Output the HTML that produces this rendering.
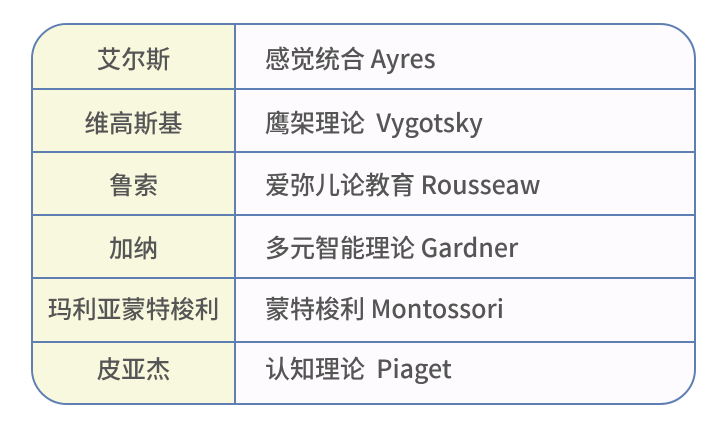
<!DOCTYPE html>
<html><head><meta charset="utf-8"><style>
body{margin:0;width:726px;height:434px;background:#fff;font-family:"Noto Sans CJK SC",sans-serif;}
.box{position:absolute;left:31px;top:23px;width:661px;height:378px;border:2px solid #5f7fb2;border-radius:36px;overflow:hidden;background:#fdfbfd;}
.l{position:absolute;left:0;top:0;width:201px;height:100%;background:#f8f8de;border-right:2px solid #5f7fb2;}
.row{position:absolute;left:0;width:661px;height:63px;}
.row .a{position:absolute;left:0;top:1px;width:201px;text-align:center;line-height:63px;font-size:24.5px;color:#555;font-weight:500;}
.row .b{position:absolute;left:232px;top:1px;line-height:63px;font-size:25px;color:#555;font-weight:500;}
.ln{position:absolute;left:0;width:661px;height:2px;background:#5f7fb2;}
</style></head><body>
<div class="box">
<div class="l"></div>
<div class="row" style="top:1px"><div class="a">艾尔斯</div><div class="b">感觉统合 Ayres</div></div>
<div class="ln" style="top:63px"></div>
<div class="row" style="top:65px"><div class="a">维高斯基</div><div class="b">鹰架理论&nbsp; Vygotsky</div></div>
<div class="ln" style="top:126px"></div>
<div class="row" style="top:127px"><div class="a">鲁索</div><div class="b">爱弥儿论教育 Rousseaw</div></div>
<div class="ln" style="top:189px"></div>
<div class="row" style="top:190px"><div class="a">加纳</div><div class="b">多元智能理论 Gardner</div></div>
<div class="ln" style="top:252px"></div>
<div class="row" style="top:251px"><div class="a">玛利亚蒙特梭利</div><div class="b">蒙特梭利 Montossori</div></div>
<div class="ln" style="top:316px"></div>
<div class="row" style="top:311px"><div class="a">皮亚杰</div><div class="b">认知理论&nbsp; Piaget</div></div>
</div>
</body></html>
